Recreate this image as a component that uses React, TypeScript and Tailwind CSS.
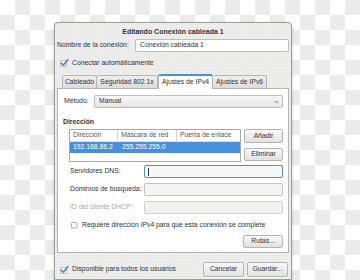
import React from "react";

const Check = () => (
  <svg width="9" height="8" viewBox="0 0 9 8" className="block">
    <rect x="0.5" y="1.5" width="6" height="6" fill="#fff" stroke="#b8b8b8" strokeWidth="0.8" />
    <polyline points="1.5,4.2 3.3,6.2 7.8,0.8" fill="none" stroke="#3f82d6" strokeWidth="1.6" strokeLinecap="round" strokeLinejoin="round" />
  </svg>
);

const Box = () => (
  <svg width="7" height="7" viewBox="0 0 7 7" className="block">
    <rect x="0.5" y="0.5" width="5.5" height="5.5" rx="0.8" fill="#fff" stroke="#9a9a9a" strokeWidth="0.8" />
  </svg>
);

const Btn = ({ children, className = "" }: { children: React.ReactNode; className?: string }) => (
  <div
    className={
      "flex items-center justify-center border border-[#b4b4b0] rounded-[2px] bg-[linear-gradient(#f8f8f8,#e2e2e0)] shadow-[0_1px_0_rgba(255,255,255,0.8)] " +
      className
    }
  >
    {children}
  </div>
);

export default function App() {
  return (
    <div className="w-[360px] h-[280px] overflow-hidden bg-[repeating-conic-gradient(#ebebeb_0_25%,#ffffff_0_50%)] bg-[length:30px_30px] pl-[54px] pt-[22px]">
      <div className="w-[238px] h-[258px] border border-[#9d9d9b] rounded-t-[4px] bg-[#ededeb] bg-[radial-gradient(#e2e2e0_0.7px,transparent_0.8px)] bg-[length:3px_3px] shadow-[0_1px_3px_rgba(0,0,0,0.2)] flex flex-col text-[6.8px] leading-none text-[#2e3436] font-['Liberation_Sans',sans-serif]">
        {/* title */}
        <div className="h-[15px] flex items-center justify-center font-bold text-[7px] pt-[1px]">
          Editando Conexión cableada 1
        </div>
        <div className="px-[2px] flex flex-col">
          {/* name */}
          <div className="mt-[1px] h-[13px] flex items-center">
            <div className="w-[78px]">Nombre de la conexión:</div>
            <div className="flex-1 h-full border border-[#bdbdb9] rounded-[2px] bg-white flex items-center pl-[4px]">
              Conexión cableada 1
            </div>
          </div>
          {/* autoconnect */}
          <div className="mt-[6px] h-[10px] flex items-center pl-[3px] gap-[3px]">
            <Check />
            <span>Conectar automáticamente</span>
          </div>
          {/* tabs */}
          <div className="mt-[5px] h-[15px] flex items-end pl-[5px]">
            <div className="h-[13px] w-[35px] flex items-center justify-center border border-b-0 border-[#b4b4b0] bg-[linear-gradient(#eeeeec,#dcdcda)] rounded-t-[2px]">
              Cableado
            </div>
            <div className="h-[13px] w-[61px] flex items-center justify-center border border-l-0 border-b-0 border-[#b4b4b0] bg-[linear-gradient(#eeeeec,#dcdcda)] rounded-t-[2px]">
              Seguridad 802.1x
            </div>
            <div className="h-[15px] w-[55px] flex items-center justify-center border border-b-0 border-[#b4b4b0] border-t-[#4a90d9] border-t-2 bg-white rounded-t-[2px] relative -mb-[1px] z-10">
              Ajustes de IPv4
            </div>
            <div className="h-[13px] w-[54px] flex items-center justify-center border border-l-0 border-b-0 border-[#b4b4b0] bg-[linear-gradient(#eeeeec,#dcdcda)] rounded-t-[2px]">
              Ajustes de IPv6
            </div>
          </div>
          {/* panel */}
          <div className="h-[165px] border border-[#b4b4b0] bg-white flex flex-col">
            {/* metodo */}
            <div className="mt-[6px] h-[13px] flex items-center pl-[6px] pr-[5px]">
              <div className="w-[30px]">Método:</div>
              <div className="flex-1 h-full border border-[#bdbdb9] rounded-[2px] bg-[linear-gradient(#f8f8f8,#e6e6e4)] flex items-center pl-[4px] pr-[3px] justify-between">
                <span>Manual</span>
                <svg width="5" height="4" viewBox="0 0 5 4">
                  <polyline points="0.7,1 2.5,2.8 4.3,1" fill="none" stroke="#555" strokeWidth="0.8" />
                </svg>
              </div>
            </div>
            {/* direccion */}
            <div className="mt-[10px] h-[8px] flex items-center pl-[5px] font-bold">Dirección</div>
            <div className="mt-[3px] flex pl-[11px] pr-[5px] gap-[3px]">
              <div className="w-[172px] h-[33px] border border-[#a9a9a6] bg-white flex flex-col">
                <div className="h-[12px] flex items-center text-[#555753] border-b border-[#e0e0de]">
                  <div className="w-[48px] h-full flex items-center pl-[3px] border-r border-[#d4d4d2]">Dirección</div>
                  <div className="w-[59px] h-full flex items-center pl-[3px] border-r border-[#d4d4d2]">Máscara de red</div>
                  <div className="flex-1 h-full flex items-center pl-[3px]">Puerta de enlace</div>
                </div>
                <div className="h-[11px] flex items-center bg-[#4a90d9] text-white">
                  <div className="w-[48px] pl-[3px]">192.168.86.2</div>
                  <div className="pl-[4px]">255.255.255.0</div>
                </div>
              </div>
              <div className="flex-1 flex flex-col gap-[5px]">
                <Btn className="h-[14px]">Añadir</Btn>
                <Btn className="h-[13px]">Eliminar</Btn>
              </div>
            </div>
            {/* dns */}
            <div className="mt-[3px] flex flex-col gap-[5px] pl-[12px] pr-[5px]">
              <div className="h-[13px] flex items-center">
                <div className="w-[74px]">Servidores DNS:</div>
                <div className="flex-1 h-full border border-[#4a90d9] rounded-[2px] bg-[#f7f7f7] flex items-center pl-[3px]">
                  <div className="w-[0.8px] h-[8px] bg-[#2e3436]" />
                </div>
              </div>
              <div className="h-[13px] flex items-center">
                <div className="w-[74px]">Dominios de búsqueda:</div>
                <div className="flex-1 h-full border border-[#c4c4c0] rounded-[2px] bg-[#f4f4f3]" />
              </div>
              <div className="h-[13px] flex items-center">
                <div className="w-[74px] text-[#a4a6a2]">ID del cliente DHCP:</div>
                <div className="flex-1 h-full border border-[#d0d0cc] rounded-[2px] bg-[#f1f1f0]" />
              </div>
            </div>
            <div className="mt-[6px] h-[10px] flex items-center pl-[13px] gap-[4px]">
              <Box />
              <span>Requiere dirección IPv4 para que esta conexión se complete</span>
            </div>
            <div className="mt-[5px] flex justify-end pr-[5px]">
              <Btn className="h-[13px] w-[40px]">Rutas...</Btn>
            </div>
          </div>
          {/* bottom */}
          <div className="mt-[9px] h-[15px] flex items-center pl-[3px] pr-[1px]">
            <Check />
            <span className="ml-[3px]">Disponible para todos los usuarios</span>
            <div className="ml-auto flex gap-[3px]">
              <Btn className="h-[15px] w-[41px]">Cancelar</Btn>
              <Btn className="h-[15px] w-[41px]">Guardar...</Btn>
            </div>
          </div>
        </div>
      </div>
    </div>
  );
}
